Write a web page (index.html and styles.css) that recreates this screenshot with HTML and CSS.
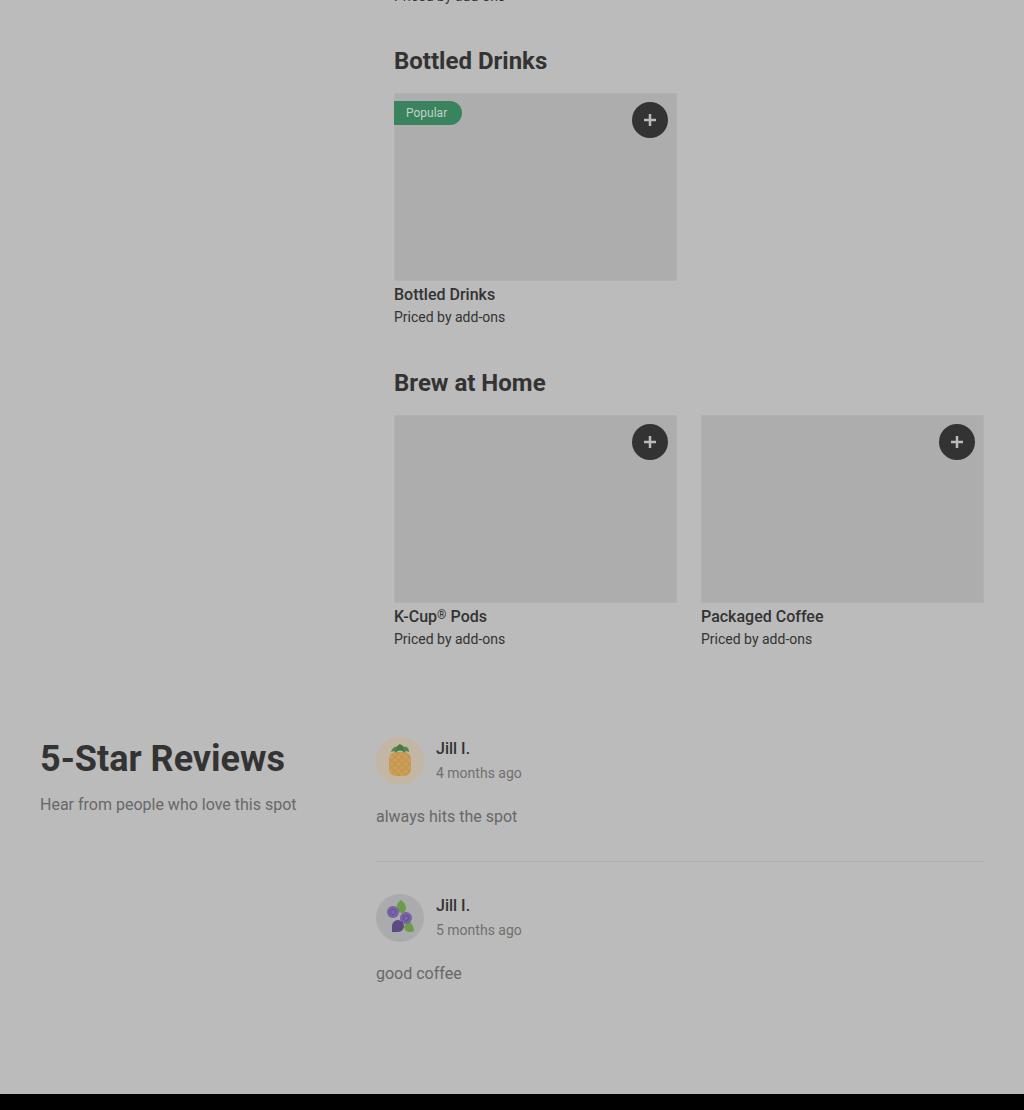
FILE: index.html
```html
<!DOCTYPE html>
<html lang="en">
<head>
    <meta charset="UTF-8">
    <meta name="viewport" content="width=device-width, initial-scale=1">
    <title>Menu and Reviews</title>
    <link rel="stylesheet" href="styles.css">
</head>
<body>
    <main>
        <div class="menu">
            <p class="price previous">Priced by add-ons</p>

            <section>
                <h3>Bottled Drinks</h3>
                <ul class="items">
                    <li>
                        <div class="photo">
                            <span class="badge">Popular</span>
                            <button class="add-btn" aria-label="Add Bottled Drinks">
                                <svg viewBox="0 0 12 12"><path d="M6 0v12M0 6h12"/></svg>
                            </button>
                        </div>
                        <h4>Bottled Drinks</h4>
                        <p class="price">Priced by add-ons</p>
                    </li>
                </ul>
            </section>

            <section>
                <h3>Brew at Home</h3>
                <ul class="items">
                    <li>
                        <div class="photo">
                            <button class="add-btn" aria-label="Add K-Cup Pods">
                                <svg viewBox="0 0 12 12"><path d="M6 0v12M0 6h12"/></svg>
                            </button>
                        </div>
                        <h4>K-Cup<sup>®</sup> Pods</h4>
                        <p class="price">Priced by add-ons</p>
                    </li>
                    <li>
                        <div class="photo">
                            <button class="add-btn" aria-label="Add Packaged Coffee">
                                <svg viewBox="0 0 12 12"><path d="M6 0v12M0 6h12"/></svg>
                            </button>
                        </div>
                        <h4>Packaged Coffee</h4>
                        <p class="price">Priced by add-ons</p>
                    </li>
                </ul>
            </section>
        </div>

        <section class="reviews">
            <div class="reviews-intro">
                <h2>5-Star Reviews</h2>
                <p>Hear from people who love this spot</p>
            </div>
            <div class="review-list">
                <article class="review">
                    <div class="reviewer">
                        <svg class="avatar" viewBox="0 0 48 48">
                            <defs>
                                <pattern id="rind" width="5" height="5" patternUnits="userSpaceOnUse" patternTransform="rotate(45 24 27)">
                                    <rect width="5" height="5" fill="#cc9f57"/>
                                    <path d="M0 0h5M0 0v5" stroke="#bf9049" stroke-width="1.4"/>
                                </pattern>
                            </defs>
                            <circle cx="24" cy="24" r="24" fill="#c4b6a4"/>
                            <rect x="13" y="15" width="22" height="24" rx="7" fill="url(#rind)"/>
                            <path d="M15 15c1-4 4-6 6-5 1-2 5-3 7 0 3-1 5 1 5 5-2-1-4-1-5 1-1-2-2-3-4-3s-3 1-4 3c-1-2-3-2-5-1z" fill="#568651"/>
                            <path d="M20 15c0-5 2-7 4-8 2 1 4 3 4 8-2-2-6-2-8 0z" fill="#467a48"/>
                        </svg>
                        <div>
                            <h4>Jill I.</h4>
                            <time>4 months ago</time>
                        </div>
                    </div>
                    <p>always hits the spot</p>
                </article>
                <article class="review">
                    <div class="reviewer">
                        <svg class="avatar" viewBox="0 0 48 48">
                            <circle cx="24" cy="24" r="24" fill="#aaabad"/>
                            <path d="M21 15c-1-4 1-7 4-9 3 2 5 5 5 8s-2 5-4 5c-2 0-4-1-5-4z" fill="#6c9b4b"/>
                            <path d="M28 33c1-3 4-5 6-5 2 2 4 5 4 9-3 2-7 1-9-1z" fill="#6c9b4b"/>
                            <circle cx="17" cy="18" r="6" fill="#7662a4"/>
                            <circle cx="17" cy="18" r="2.5" fill="#7d69ab" stroke="#5f4d90"/>
                            <circle cx="30" cy="24" r="6" fill="#7662a4"/>
                            <circle cx="30" cy="24" r="2.5" fill="#7d69ab" stroke="#5f4d90"/>
                            <path d="M16 38v-6a6 6 0 1 1 6 6z" fill="#5b4b80"/>
                        </svg>
                        <div>
                            <h4>Jill I.</h4>
                            <time>5 months ago</time>
                        </div>
                    </div>
                    <p>good coffee</p>
                </article>
            </div>
        </section>
    </main>
    <footer></footer>
</body>
</html>
```
FILE: styles.css
```css
* {
    box-sizing: border-box;
    margin: 0;
    padding: 0;
}

body {
    font-family: Roboto, "Liberation Sans", sans-serif;
    font-size: 16px;
    line-height: 24px;
    color: #333;
    background: #bbb;
}

main {
    padding: 0 40px 108px;
    overflow: hidden;
}

/* menu */
.menu {
    margin-left: 354px;
}

.menu section {
    margin-top: 40px;
}

.menu .previous {
    margin: -14px 0 -1px;
}

h3 {
    font-size: 24px;
    font-weight: 700;
    line-height: 32px;
    margin-bottom: 16px;
}

h4 {
    font-size: 16px;
    font-weight: 500;
}

sup {
    font-size: 12px;
    line-height: 0;
    vertical-align: 3px;
}

.items {
    display: grid;
    grid-template-columns: 1fr 1fr;
    gap: 24px;
    list-style: none;
}

.photo {
    position: relative;
    height: 188px;
    margin-bottom: 2px;
    background: #adadad;
    border: 1px solid #b1b1b1;
}

.badge {
    position: absolute;
    top: 7px;
    left: -1px;
    min-width: 68px;
    padding: 0 12px;
    font-size: 12px;
    color: #c4d0c9;
    background: #39845e;
    border-radius: 0 12px 12px 0;
}

.add-btn {
    position: absolute;
    top: 8px;
    right: 8px;
    display: flex;
    align-items: center;
    justify-content: center;
    width: 36px;
    height: 36px;
    background: #333;
    border: none;
    border-radius: 50%;
    cursor: pointer;
}

.add-btn svg {
    width: 12px;
    height: 12px;
    stroke: #bbb;
    stroke-width: 2.5;
}

.price {
    font-size: 14px;
    line-height: 20px;
}

/* reviews */
.reviews {
    display: grid;
    grid-template-columns: 312px 1fr;
    gap: 24px;
    margin-top: 88px;
}

h2 {
    font-size: 36px;
    font-weight: 700;
    line-height: 44px;
    margin-bottom: 12px;
}

.reviews p {
    color: #686868;
}

.review + .review {
    margin-top: 32px;
    padding-top: 32px;
    border-top: 1px solid #b0b0b0;
}

.reviewer {
    display: flex;
    gap: 12px;
    margin-bottom: 20px;
}

.avatar {
    width: 48px;
    height: 48px;
}

time {
    display: block;
    font-size: 14px;
    color: #707070;
}

footer {
    height: 16px;
    background: #000;
}
```
